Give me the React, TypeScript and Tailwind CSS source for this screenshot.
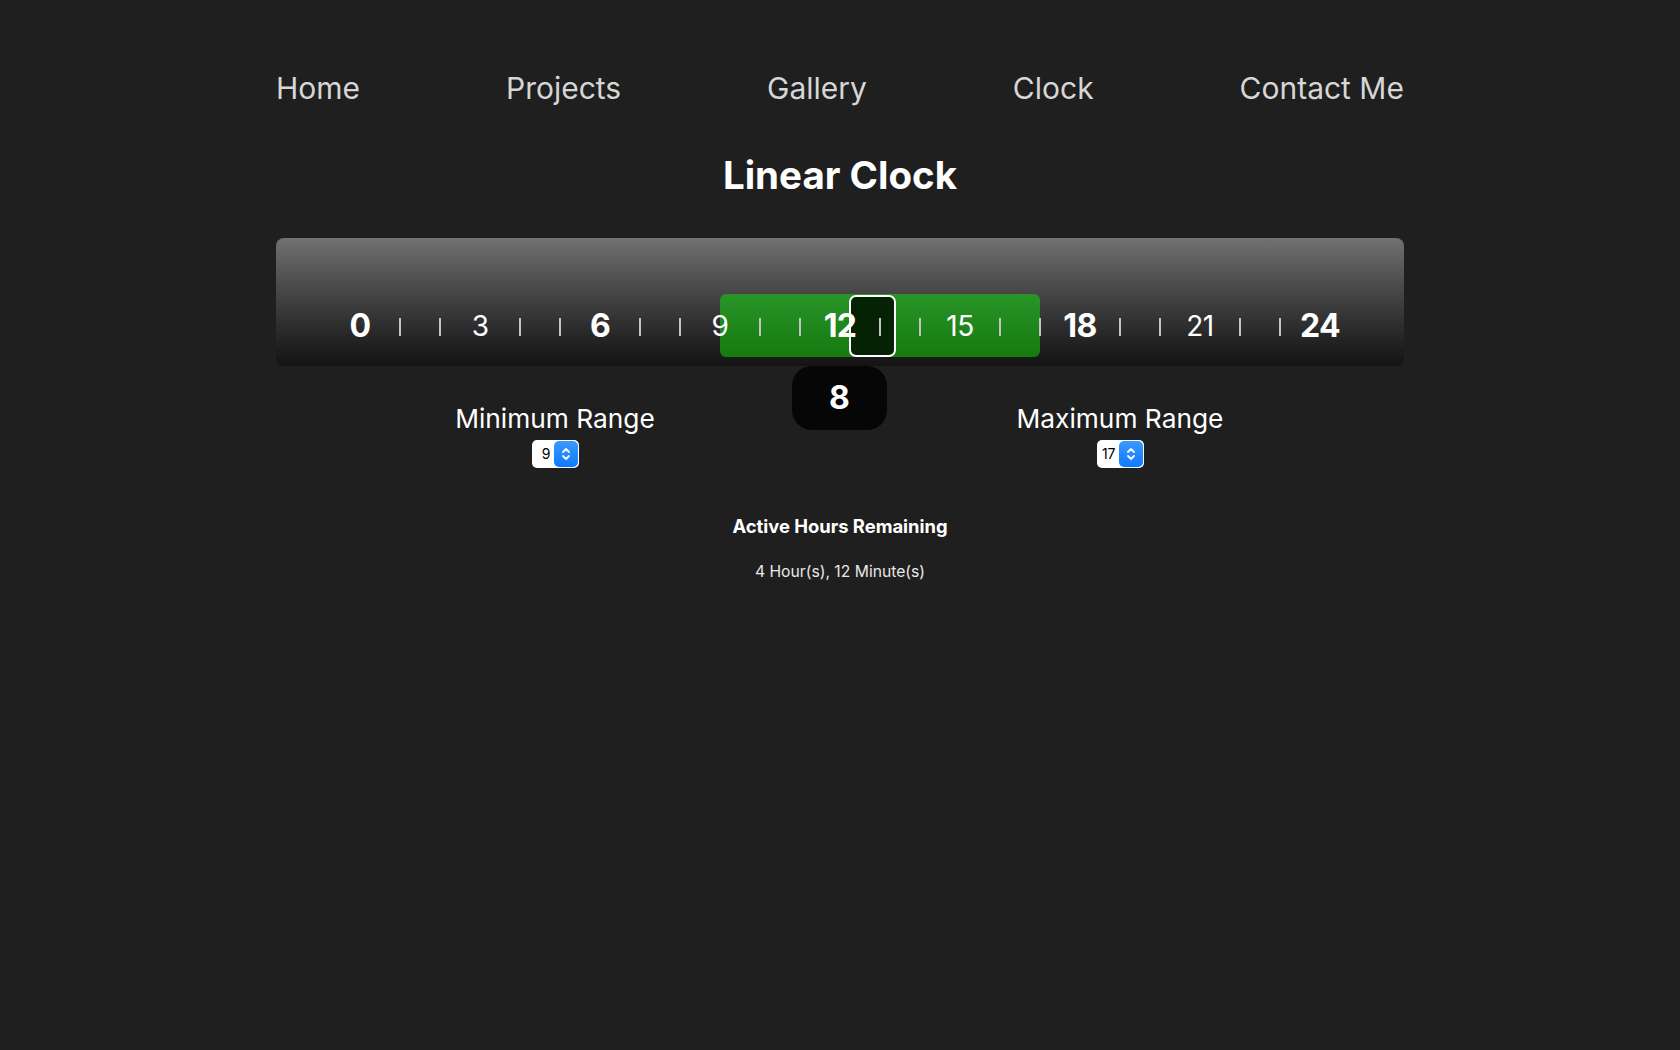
import React from "react";

const HOUR_W = 40;
const TIME_HOURS = 12 + 48 / 60;
const MIN_H = 9;
const MAX_H = 17;

function Spinner({ value }: { value: number }) {
  return (
    <div className="flex h-[28px] w-[47px] items-center justify-end rounded-[5px] bg-white pr-[1px]">
      <span className="pr-[3px] text-[14px] leading-none text-black">{value}</span>
      <div className="flex h-[26px] w-[24px] items-center justify-center rounded-[5px] bg-gradient-to-b from-[#3a99ff] to-[#0a7aff]">
        <svg width="10" height="16" viewBox="0 0 10 16" fill="none" stroke="white" strokeWidth="1.8" strokeLinecap="round" strokeLinejoin="round">
          <path d="M2 6 L5 3 L8 6" />
          <path d="M2 10 L5 13 L8 10" />
        </svg>
      </div>
    </div>
  );
}

export default function App() {
  const hours = Array.from({ length: 25 }, (_, i) => i);
  const indicatorLeft = TIME_HOURS * HOUR_W + HOUR_W / 2 - 23;
  return (
    <div
      className="min-h-[1050px] w-full bg-[#1f1f1f] text-white"
      style={{ fontFamily: "Inter, 'Noto Sans', sans-serif" }}
    >
      <div className="mx-auto w-[1128px]">
        <nav className="flex justify-between pt-[70px] text-[30px] leading-[36px] text-[#d6d6d6]">
          <span>Home</span>
          <span>Projects</span>
          <span>Gallery</span>
          <span>Clock</span>
          <span>Contact Me</span>
        </nav>
        <h1 className="mt-[49px] text-center text-[38.5px] font-bold leading-[40px]">
          Linear Clock
        </h1>
        <div className="mt-[43px] flex h-[128px] justify-center rounded-[8px] bg-gradient-to-b from-[#717171] to-[#131313]">
          <div className="relative mt-[56px] h-[63px] w-[1000px]">
            <div
              className="absolute top-0 h-[63px] rounded-[6px] bg-gradient-to-b from-[#289427] to-[#167a0f]"
              style={{ left: MIN_H * HOUR_W + HOUR_W / 2, width: (MAX_H - MIN_H) * HOUR_W }}
            />
            <div
              className="absolute top-[1px] h-[62px] w-[47px] rounded-[7px] border-2 border-white bg-[#062205]"
              style={{ left: indicatorLeft }}
            />
            <div className="relative flex h-[63px] items-center">
              {hours.map((h) => (
                <div key={h} className="flex w-[40px] items-center justify-center">
                  {h % 6 === 0 ? (
                    <span className="text-[32px] font-bold leading-none tracking-[-0.02em]">{h}</span>
                  ) : h % 3 === 0 ? (
                    <span className="text-[28px] font-normal leading-none tracking-[-0.02em]">{h}</span>
                  ) : (
                    <span className="mt-[2px] block h-[18px] w-[2px] bg-[#c4c4c4]" />
                  )}
                </div>
              ))}
            </div>
          </div>
        </div>
        <div className="ml-[42px] grid w-[1035px] grid-cols-[474px_95px_466px]">
          <div className="flex flex-col items-center pt-[37px]">
            <div className="text-[26.3px] leading-[32px]">Minimum Range</div>
            <div className="mt-[5px]">
              <Spinner value={9} />
            </div>
          </div>
          <div className="flex h-[64px] items-center justify-center rounded-[20px] bg-[#060606] text-[32px] font-bold">
            8
          </div>
          <div className="flex flex-col items-center pt-[37px]">
            <div className="text-[26.3px] leading-[32px]">Maximum Range</div>
            <div className="mt-[5px]">
              <Spinner value={17} />
            </div>
          </div>
        </div>
        <div className="mt-[45px] text-center text-[18.4px] font-bold leading-[26px]">Active Hours Remaining</div>
        <div className="mt-[21px] text-center text-[15.7px] leading-[24px] text-[#e8e8e8]">4 Hour(s), 12 Minute(s)</div>
      </div>
    </div>
  );
}
